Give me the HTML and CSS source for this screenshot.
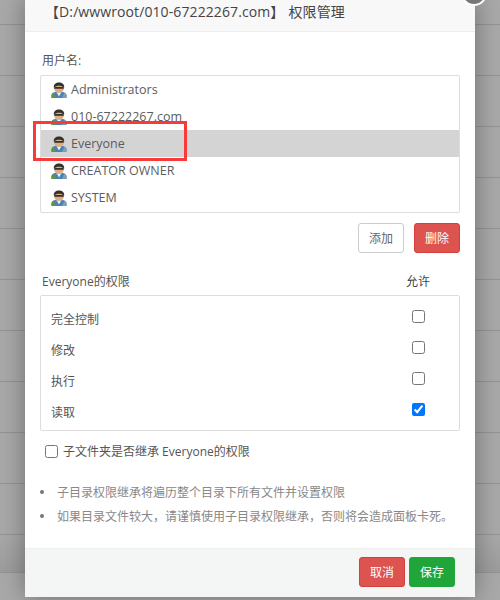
FILE: index.html
```html
<!DOCTYPE html>
<html lang="zh-CN">
<head>
    <meta charset="UTF-8">
    <title>权限管理</title>
    <link rel="stylesheet" href="styles.css">
</head>
<body>
    <svg width="0" height="0" class="defs">
        <symbol id="user" viewBox="0 0 16 16">
            <path d="M.5 16v-2.500c0-2 1.800-3 3.500-3.500h8c1.700.5 3.500 1.500 3.500 3.500V16z" fill="#4a82b8"/>
            <path d="M.5 16v-2.500c0-1.400.9-2.300 2-2.900L5 16z" fill="#5f9440"/>
            <path d="M15.500 16v-2.500c0-1.400-.9-2.300-2-2.900L11 16z" fill="#7f9fb8"/>
            <path d="M5.500 10h5L8 14.500z" fill="#eef2f5"/>
            <ellipse cx="8" cy="6.500" rx="4.800" ry="4.500" fill="#dcae82"/>
            <path d="M2.800 5.500C2.500 2 5 .5 8 .5s5.500 1.500 5.200 5C11.500 4.300 10 3.800 8 3.800s-3.500.5-5.200 1.700z" fill="#33312e"/>
            <rect x="3.200" y="5" width="9.600" height="1.800" rx=".6" fill="#33312e"/>
        </symbol>
    </svg>
    <div class="rows">
        <div class="row"></div><div class="row"></div><div class="row"></div><div class="row"></div>
        <div class="row"></div><div class="row"></div><div class="row"></div><div class="row"></div>
        <div class="row"></div><div class="row"></div><div class="row row-last"></div>
    </div>
    <div class="modal">
        <span class="close"></span>
        <div class="modal-header">【D:/wwwroot/010-67222267.com】<span class="header-name">权限管理</span></div>
        <div class="modal-body">
            <div class="label">用户名:</div>
            <div class="user-list">
                <div class="user"><svg class="user-icon"><use href="#user"/></svg>Administrators</div>
                <div class="user"><svg class="user-icon"><use href="#user"/></svg>010-67222267.com</div>
                <div class="user selected"><svg class="user-icon"><use href="#user"/></svg>Everyone</div>
                <div class="user"><svg class="user-icon"><use href="#user"/></svg>CREATOR OWNER</div>
                <div class="user"><svg class="user-icon"><use href="#user"/></svg>SYSTEM</div>
                <span class="highlight"></span>
            </div>
            <div class="list-actions">
                <button class="btn btn-outline">添加</button>
                <button class="btn btn-danger">删除</button>
            </div>
            <div class="perm-head">
                <span>Everyone的权限</span>
                <span class="perm-allow">允许</span>
            </div>
            <div class="perm-box">
                <label class="perm"><span class="perm-name">完全控制</span><input type="checkbox" class="check"></label>
                <label class="perm"><span class="perm-name">修改</span><input type="checkbox" class="check"></label>
                <label class="perm"><span class="perm-name">执行</span><input type="checkbox" class="check"></label>
                <label class="perm"><span class="perm-name">读取</span><input type="checkbox" class="check" checked></label>
            </div>
            <label class="inherit"><input type="checkbox" class="check">子文件夹是否继承 Everyone的权限</label>
            <ul class="tips">
                <li>子目录权限继承将遍历整个目录下所有文件并设置权限</li>
                <li>如果目录文件较大，请谨慎使用子目录权限继承，否则将会造成面板卡死。</li>
            </ul>
        </div>
        <div class="modal-footer">
            <button class="btn btn-danger">取消</button>
            <button class="btn btn-success">保存</button>
        </div>
    </div>
</body>
</html>
```

FILE: styles.css
```css
* {
    box-sizing: border-box;
}

html, body {
    height: 100%;
}

body {
    margin: 0;
    overflow: hidden;
    background-color: #a9a9a9;
    font-family: "Open Sans", "Noto Sans CJK SC", sans-serif;
    font-size: 12px;
    color: #555;
}

.defs {
    display: block;
    height: 0;
}

.rows {
    padding-top: 24px;
}

.row {
    height: 51px;
    border-top: 1px solid #949494;
}

.row-last {
    height: 39px;
    border-bottom: 1px solid #949494;
    background: linear-gradient(rgba(0, 0, 0, 0), rgba(0, 0, 0, 0.08));
}

.modal {
    position: absolute;
    top: -3px;
    left: 25px;
    width: 450px;
    height: 600px;
    display: flex;
    flex-direction: column;
    background-color: #fff;
    box-shadow: 0 0 24px rgba(0, 0, 0, 0.35);
}

.close {
    position: absolute;
    top: -17px;
    right: -12px;
    width: 26px;
    height: 26px;
    border: 2px solid #fff;
    border-radius: 50%;
    background-color: #777;
}

.modal-header {
    height: 35px;
    padding: 4px 0 0 20px;
    font-size: 14px;
    letter-spacing: 0.1px;
    color: #444;
    background-color: #f8f8f8;
    border-bottom: 1px solid #eee;
}

.header-name {
    margin-left: 4px;
}

.modal-body {
    flex: 1;
    padding: 20px 15px 0 15px;
}

.label {
    height: 23px;
    padding-left: 2px;
    line-height: 18px;
}

.user-list {
    position: relative;
    height: 138px;
    border: 1px solid #ddd;
    border-radius: 2px;
}

.user {
    display: flex;
    align-items: center;
    height: 27px;
    padding-left: 10px;
    font-size: 12.5px;
    color: #5c5c5c;
}

.user.selected {
    background-color: #d4d4d4;
}

.user-icon {
    width: 16px;
    height: 16px;
    margin-right: 4px;
}

.highlight {
    position: absolute;
    top: 45px;
    left: -8px;
    width: 154px;
    height: 40px;
    border: 3px solid #f93a3a;
}

.list-actions {
    display: flex;
    justify-content: flex-end;
    gap: 10px;
    margin-top: 10px;
}

.btn {
    width: 46px;
    height: 30px;
    padding: 0;
    border: 1px solid transparent;
    border-radius: 3px;
    font-family: inherit;
    font-size: 12px;
}

.btn-outline {
    background-color: #fff;
    border-color: #ccc;
    color: #666;
}

.btn-danger {
    background-color: #dc5350;
    border-color: #d43f3a;
    color: #fff;
}

.btn-success {
    background-color: #20a53a;
    border-color: #20a53a;
    color: #fff;
}

.perm-head {
    display: flex;
    justify-content: space-between;
    height: 22px;
    margin-top: 20px;
    padding: 0 30px 0 2px;
    line-height: 18px;
}

.perm-allow {
    color: #444;
}

.perm-box {
    height: 136px;
    padding: 6px 34px 0 10px;
    border: 1px solid #ddd;
    border-radius: 2px;
}

.perm {
    display: flex;
    justify-content: space-between;
    align-items: center;
    height: 31px;
}

.perm-name {
    margin-top: 2px;
}

.check {
    width: 13px;
    height: 13px;
    margin: 0;
}

.perm .check {
    margin-bottom: 2px;
}

.inherit {
    display: flex;
    align-items: center;
    height: 20px;
    margin-top: 10px;
    padding-left: 5px;
}

.inherit .check {
    margin-right: 5px;
}

.tips {
    margin: 19px 0 0 0;
    padding: 0;
    list-style: none;
    color: #888;
}

.tips li {
    display: flex;
    align-items: center;
    gap: 13px;
    height: 24px;
}

.tips li::before {
    content: "";
    width: 4px;
    height: 4px;
    border-radius: 50%;
    background-color: #777;
}

.modal-footer {
    display: flex;
    justify-content: flex-end;
    gap: 4px;
    height: 49px;
    padding: 8px 20px 0 0;
    background-color: #f4f6f6;
    border-top: 1px solid #eef0f0;
}
```
